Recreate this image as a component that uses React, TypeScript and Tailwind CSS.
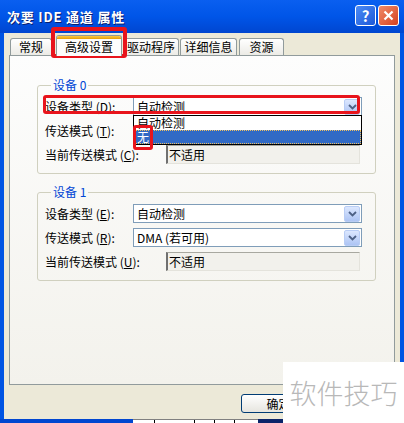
const cjk = "font-['Noto_Sans_CJK_SC','Noto_Sans',sans-serif]";

function Arrow() {
  return (
    <div className="flex h-[16px] w-[16px] items-center justify-center rounded-[2px] border border-[#B9CDF5] bg-gradient-to-b from-[#DCE7FE] to-[#ADC4F4]">
      <svg width="9" height="6" viewBox="0 0 9 6">
        <path d="M1 1 L4.5 4.5 L8 1" stroke="#4D6185" strokeWidth="1.8" fill="none" />
      </svg>
    </div>
  );
}

function Combo({ value }: { value: string }) {
  return (
    <div className="flex h-[19px] w-[229px] items-center justify-between border border-[#7F9DB9] bg-white pl-[3px] pr-px">
      <span className="leading-none">{value}</span>
      <Arrow />
    </div>
  );
}

function ReadOnly({ value }: { value: string }) {
  return (
    <div className="flex h-[19px] w-[194px] items-center border-t border-l-2 border-r border-b border-t-[#A8A8A0] border-l-[#707070] border-r-[#E4E3DC] border-b-[#E4E3DC] bg-[#F2F1EC] pl-px">
      <span className="leading-none">{value}</span>
    </div>
  );
}

function Label({ text, k, w }: { text: string; k: string; w: string }) {
  return (
    <span className={`${w} shrink-0 leading-none`}>
      {text} (<u>{k}</u>):
    </span>
  );
}

function Group({ n, keys, mode }: { n: string; keys: string[]; mode: string }) {
  return (
    <fieldset className="w-[339px] rounded-[3px] border border-[#D0D0BF] pl-[7px] pt-[5px] pb-[9px]">
      <legend className="ml-[6px] px-[2px] text-[12px] leading-[14px] text-[#0046D5]">设备 {n}</legend>
      <div className="flex flex-col gap-[5px]">
        <div className="flex items-center">
          <Label text="设备类型" k={keys[0]} w="w-[88px]" />
          <Combo value="自动检测" />
        </div>
        <div className="flex items-center">
          <Label text="传送模式" k={keys[1]} w="w-[88px]" />
          <Combo value={mode} />
        </div>
        <div className="flex items-center">
          <Label text="当前传送模式" k={keys[2]} w="w-[121px]" />
          <ReadOnly value="不适用" />
        </div>
      </div>
    </fieldset>
  );
}

function Tab({ label, w, ml }: { label: string; w: string; ml: string }) {
  return (
    <div className={`${w} ${ml} flex h-[17px] items-center justify-center rounded-t-[3px] border border-b-0 border-[#919B9C] bg-gradient-to-b from-white to-[#ECEBE6] text-[12px] leading-none`}>
      {label}
    </div>
  );
}

export default function App() {
  return (
    <div className={`relative flex h-[423px] w-[404px] flex-col overflow-hidden bg-[#0054E3] text-[12px] text-black ${cjk}`}>
      {/* 标题栏 */}
      <div className="flex h-[33px] shrink-0 items-center justify-between bg-gradient-to-b from-[#0A5FF0] via-[#0055E8] to-[#0046D0] pl-[7px] pr-[5px]">
        <span className="text-[13px] font-bold leading-none tracking-[0.8px] text-white [text-shadow:1px_1px_0_#0A1E6E]">
          次要 IDE 通道 属性
        </span>
        <div className="flex gap-[2px] pb-[2px]">
          <div className="flex h-[21px] w-[21px] items-center justify-center rounded-[3px] border border-white bg-gradient-to-br from-[#4C8BF5] to-[#1C57D8] text-[15px] font-bold leading-none text-white">
            ?
          </div>
          <div className="flex h-[21px] w-[21px] items-center justify-center rounded-[3px] border border-white bg-gradient-to-br from-[#F08A68] to-[#D43E1C]">
            <svg width="11" height="11" viewBox="0 0 11 11">
              <path d="M1.5 1.5 L9.5 9.5 M9.5 1.5 L1.5 9.5" stroke="white" strokeWidth="2.2" />
            </svg>
          </div>
        </div>
      </div>

      {/* 窗体 */}
      <div className="flex flex-1 px-[4px]">
        <div className="flex flex-1 flex-col bg-[#ECE9D8]">
          <div className="flex h-[22px] items-end pl-[6px]">
            <Tab label="常规" w="w-[42px]" ml="ml-0" />
            <div className="relative z-10 ml-[4px] -mb-px flex h-[21px] w-[66px] flex-col rounded-t-[3px] border border-b-0 border-[#919B9C] bg-[#FDFDFD]">
              <div className="h-[3px] rounded-t-[2px] bg-gradient-to-b from-[#FFC83C] to-[#E6A000]" />
              <div className="flex flex-1 items-center justify-center pb-[2px] leading-none">高级设置</div>
            </div>
            <Tab label="驱动程序" w="w-[56px]" ml="ml-px" />
            <Tab label="详细信息" w="w-[57px]" ml="ml-px" />
            <Tab label="资源" w="w-[45px]" ml="ml-[2px]" />
          </div>

          <div className="mx-[5px] flex h-[330px] flex-col gap-[11px] border border-[#919B9C] bg-gradient-to-b from-[#FDFDFD] to-[#F3F2EC] pl-[27px] pt-[22px]">
            <Group n="0" keys={["D", "T", "C"]} mode="" />
            <Group n="1" keys={["E", "R", "U"]} mode="DMA (若可用)" />
          </div>

          <div className="flex flex-1 items-start pl-[237px] pt-[9px]">
            <div className="flex h-[19px] w-[75px] items-center justify-center rounded-[3px] border border-[#003C74] bg-gradient-to-b from-white to-[#E6E5DF] leading-none">
              确定
            </div>
          </div>
        </div>
      </div>

      {/* 底边 */}
      <div className="flex h-[4px] shrink-0">
        <div className="w-[133px] bg-[#0046D0]" />
        <div className="flex w-[125px] border-t border-[#808080] bg-white">
          <div className="ml-[21px] h-full w-px bg-black" />
          <div className="ml-[39px] h-full w-px bg-black" />
          <div className="ml-[19px] h-full w-px bg-black" />
          <div className="ml-[19px] h-full w-px bg-black" />
        </div>
        <div className="flex-1 bg-[#0A246A]" />
      </div>

      {/* 下拉列表 */}
      <div className="absolute left-[133px] top-[115px] flex w-[229px] flex-col border border-black bg-white leading-none">
        <div className="flex h-[14px] items-center pl-[3px]">自动检测</div>
        <div className="flex h-[14px] items-center border border-dotted border-[#F0C060] bg-[#316AC5] pl-[2px] text-white">无</div>
      </div>

      {/* 红框标注 */}
      <div className="absolute left-[51px] top-[27px] h-[31px] w-[76px] rounded-[3px] border-[4px] border-[#E8141C]" />
      <div className="absolute left-[43px] top-[95px] h-[19px] w-[317px] rounded-[3px] border-[3px] border-[#E8141C]" />
      <div className="absolute left-[133px] top-[125px] h-[25px] w-[20px] rounded-[3px] border-[3px] border-[#E8141C]" />

      {/* 水印 */}
      <div className="absolute bottom-0 right-0 flex h-[61px] w-[121px] items-center justify-center bg-white text-[27px] font-light leading-none text-[#B8B8B8]">
        软件技巧
      </div>
    </div>
  );
}
